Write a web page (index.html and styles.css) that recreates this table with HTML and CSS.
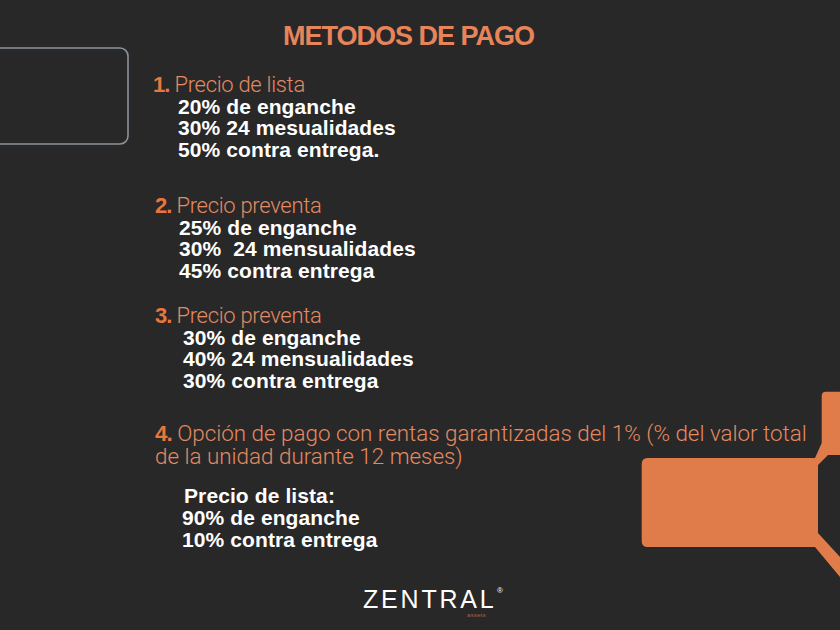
FILE: index.html
```html
<!DOCTYPE html>
<html lang="es">
<head>
<meta charset="utf-8">
<title>Metodos de pago</title>
<link rel="stylesheet" href="styles.css">
</head>
<body>
<div class="slide">
  <svg class="deco-left" width="140" height="110" viewBox="0 0 140 110">
    <rect x="-20" y="8" width="148" height="96" rx="8" ry="8" fill="none" stroke="#8b929b" stroke-width="1.6"/>
  </svg>
  <svg class="deco-right" width="220" height="220" viewBox="0 0 220 220">
    <path d="M201.7 16 Q201.7 11.7 206 11.7 L230 11.7 L230 75 L208 75 L198 85 L198 153 L220 177 L220 197 L195 167 L27.7 167 Q21.7 167 21.7 161 L21.7 84 Q21.7 78 27.7 78 L195 78 L201.7 63 Z" fill="#e07c49"/>
  </svg>

  <h1 class="title">METODOS DE PAGO</h1>

  <section class="item item-1">
    <p class="head"><span class="num">1.</span> Precio de lista</p>
    <div class="lines">
      <p>20% de enganche</p>
      <p>30% 24 mesualidades</p>
      <p>50% contra entrega.</p>
    </div>
  </section>

  <section class="item item-2">
    <p class="head"><span class="num">2.</span> Precio preventa</p>
    <div class="lines">
      <p>25% de enganche</p>
      <p>30%&nbsp; 24 mensualidades</p>
      <p>45% contra entrega</p>
    </div>
  </section>

  <section class="item item-3">
    <p class="head"><span class="num">3.</span> Precio preventa</p>
    <div class="lines">
      <p>30% de enganche</p>
      <p>40% 24 mensualidades</p>
      <p>30% contra entrega</p>
    </div>
  </section>

  <section class="item item-4">
    <p class="head head-long"><span class="num">4.</span> Opción de pago con rentas garantizadas del 1% (% del valor total<br>de la unidad durante 12 meses)</p>
    <div class="lines sub">
      <p class="sub-title">Precio de lista:</p>
      <p>90% de enganche</p>
      <p>10% contra entrega</p>
    </div>
  </section>

  <footer class="logo">
    <span class="brand">ZENTRAL</span><span class="reg">®</span>
    <span class="assets">assets</span>
  </footer>
</div>
</body>
</html>
```

FILE: styles.css
```css
html, body {
  margin: 0;
  padding: 0;
  background: #282828;
}

.slide {
  position: relative;
  width: 840px;
  height: 630px;
  overflow: hidden;
  background: #282828;
  font-family: "Liberation Sans", Arial, sans-serif;
}

.deco-left {
  position: absolute;
  left: 0;
  top: 40px;
}

.deco-right {
  position: absolute;
  left: 620px;
  top: 380px;
}

.title {
  margin: 0 0 0 283px;
  padding-top: 21px;
  font-size: 27px;
  line-height: 30px;
  font-weight: 700;
  letter-spacing: -1px;
  color: #e8845a;
}

.item p {
  margin: 0;
}

.head {
  font-family: Roboto, "Liberation Sans", sans-serif;
  font-weight: 300;
  font-size: 22px;
  line-height: 22px;
  letter-spacing: -0.3px;
  color: #e48a62;
}

.head-long {
  font-size: 22.4px;
  letter-spacing: 0;
}

.num {
  font-family: "Liberation Sans", Arial, sans-serif;
  font-weight: 700;
  color: #e8773e;
  letter-spacing: -1px;
}

.lines {
  padding-left: 25px;
  font-size: 21px;
  line-height: 21.5px;
  font-weight: 700;
  letter-spacing: 0.1px;
  color: #ffffff;
}

.item-1 { margin: 22.5px 0 0 153px; }
.item-2 { margin: 34.5px 0 0 155px; }
.item-2 .lines { padding-left: 24px; }
.item-3 { margin: 23.5px 0 0 155px; }
.item-3 .lines { padding-left: 28px; }
.item-4 { margin: 30.5px 0 0 155px; }

.lines.sub {
  margin-top: 18.5px;
  padding-left: 27px;
  line-height: 22px;
}

.sub-title {
  padding-left: 2px;
}

.logo {
  position: relative;
  margin: 36px 0 0 363px;
  width: 150px;
  height: 32px;
  color: #ffffff;
}

.brand {
  font-family: "Liberation Sans", Arial, sans-serif;
  font-size: 25px;
  line-height: 24px;
  letter-spacing: 2.8px;
  font-weight: 400;
}

.reg {
  position: absolute;
  left: 134px;
  top: 0;
  font-size: 8px;
  line-height: 8px;
}

.assets {
  position: absolute;
  left: 104px;
  top: 25px;
  font-size: 6px;
  line-height: 6px;
  letter-spacing: 0.3px;
  color: #a8644a;
}
```
